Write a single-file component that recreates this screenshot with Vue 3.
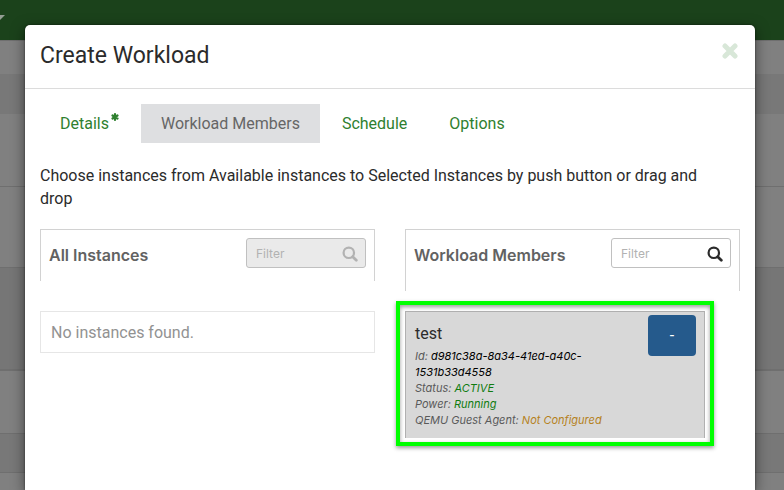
<script setup>
import { ref } from 'vue'

const tabs = [
  { label: 'Details', required: true },
  { label: 'Workload Members' },
  { label: 'Schedule' },
  { label: 'Options' }
]
const active = ref('Workload Members')
const bands = ['b1', 'b2', 'b3', 'b4', 'b5', 'b6', 'b7', 'b8']
const filterAll = ref('')
const filterMembers = ref('')
</script>

<template>
  <div class="page">
    <div class="backdrop" aria-hidden="true">
      <div class="navbar">
        <svg class="caret" width="5" height="6" viewBox="0 0 5 6"><path d="M0 0H5L0 5Z" fill="#949e94" /></svg>
      </div>
      <div v-for="b in bands" :key="b" class="band" :class="b"></div>
    </div>

    <section class="modal" role="dialog" aria-labelledby="modal-title">
      <header class="modal-header">
        <h1 id="modal-title">Create Workload</h1>
        <button class="close" type="button" aria-label="Close">
          <svg width="16" height="16" viewBox="0 0 16 16"><path d="M3 3L13 13M13 3L3 13" stroke="#d8e7d8" stroke-width="5" stroke-linecap="round" /></svg>
        </button>
      </header>

      <div class="modal-body">
        <nav class="tabs">
          <a v-for="t in tabs" :key="t.label" href="#" class="tab" :class="{ active: t.label === active }" @click.prevent="active = t.label">
            {{ t.label }}
            <svg v-if="t.required" class="star" width="8" height="10" viewBox="0 0 8 10"><path d="M4 2V8M1.5 3.5L6.5 6.5M6.5 3.5L1.5 6.5" stroke="#2f802f" stroke-width="2.2" stroke-linecap="round" /></svg>
          </a>
        </nav>

        <p class="help">Choose instances from Available instances to Selected Instances by push button or drag and drop</p>

        <div class="columns">
          <section class="column">
            <div class="panel">
              <h2>All Instances</h2>
              <label class="filter disabled">
                <input v-model="filterAll" type="text" placeholder="Filter" aria-label="Filter all instances" disabled />
                <svg width="16" height="16" viewBox="0 0 16 16" fill="none" stroke="currentColor"><circle cx="6.8" cy="6.8" r="5.2" stroke-width="2.2" /><path d="M10.7 10.7L14.3 14.3" stroke-width="2.8" stroke-linecap="round" /></svg>
              </label>
            </div>
            <div class="empty">No instances found.</div>
          </section>

          <section class="column">
            <div class="panel members">
              <h2>Workload Members</h2>
              <label class="filter">
                <input v-model="filterMembers" type="text" placeholder="Filter" aria-label="Filter workload members" />
                <svg width="16" height="16" viewBox="0 0 16 16" fill="none" stroke="currentColor"><circle cx="6.8" cy="6.8" r="5.2" stroke-width="2.2" /><path d="M10.7 10.7L14.3 14.3" stroke-width="2.8" stroke-linecap="round" /></svg>
              </label>
            </div>
            <article class="card">
              <div class="info">
                <h3>test</h3>
                <p>Id: <span class="id">d981c38a-8a34-41ed-a40c-1531b33d4558</span></p>
                <p>Status: <span class="ok">ACTIVE</span></p>
                <p>Power: <span class="ok">Running</span></p>
                <p>QEMU Guest Agent: <span class="warn">Not Configured</span></p>
              </div>
              <button class="remove" type="button">-</button>
            </article>
          </section>
        </div>
      </div>
    </section>
  </div>
</template>

<style>
body {
  margin: 0;
  background: #808080;
}
</style>

<style scoped>
.page {
  position: relative;
  min-height: 100vh;
  overflow: hidden;
  font-family: Roboto, "Liberation Sans", sans-serif;
  font-size: 16px;
  color: #2b2b2b;
}
.page * {
  box-sizing: border-box;
}
.backdrop {
  position: absolute;
  inset: 0;
  display: flex;
  flex-direction: column;
}
.navbar {
  flex: none;
  height: 40px;
  padding-top: 15px;
  background: #1b421b;
}
.caret {
  display: block;
}
.band {
  flex: none;
  background: #808080;
  border-top: 1px solid #6f6f6f;
}
.b1 { height: 34px; }
.b2 { height: 40px; background: #787878; border-top: 0; }
.b3 { height: 72px; border-top: 0; }
.b4 { height: 81px; }
.b5 { height: 102px; background: #767676; }
.b6 { height: 64px; border-top-width: 2px; }
.b7 { height: 39px; background: #787878; }
.b8 { flex: 1; }

.modal {
  position: relative;
  margin: 25px 29px 0 25px;
  min-height: calc(100vh - 25px);
  background: #fff;
  border-radius: 5px 5px 0 0;
  box-shadow: 0 4px 14px rgba(0, 0, 0, 0.5), 0 0 2px rgba(0, 0, 0, 0.6);
}
.modal-header {
  display: flex;
  justify-content: space-between;
  align-items: flex-start;
  height: 64px;
  padding: 16px 17px 0 15px;
  border-bottom: 1px solid #dcdcdc;
}
h1 {
  margin: 0;
  font-size: 23px;
  line-height: 30px;
  font-weight: 400;
}
.close {
  display: flex;
  margin-top: 2px;
  padding: 0;
  border: 0;
  background: none;
}
.modal-body {
  padding: 15px;
}
.tabs {
  display: flex;
  gap: 2px;
}
.tab {
  display: flex;
  gap: 2px;
  padding: 8px 20px;
  line-height: 23px;
  color: #2f802f;
  text-decoration: none;
}
.tab.active {
  background: #dedfe1;
  color: #666;
}
.help {
  margin: 21px 0 19px;
  padding-right: 24px;
  line-height: 23px;
}
.columns {
  display: grid;
  grid-template-columns: 1fr 1fr;
  gap: 30px;
  align-items: start;
}
.panel {
  display: flex;
  justify-content: space-between;
  align-items: flex-start;
  height: 52px;
  margin-bottom: 30px;
  padding: 8px 8px 0;
  border: 1px solid #d2d2d2;
  border-bottom: 0;
}
.panel.members {
  height: 62px;
  margin-bottom: 20px;
}
h2 {
  margin: 5px 0 0;
  font-family: Inter, "Liberation Sans", sans-serif;
  font-size: 16px;
  line-height: 24px;
  font-weight: 600;
  color: #626262;
}
.filter {
  display: flex;
  align-items: center;
  width: 120px;
  height: 30px;
  padding: 0 7px 0 9px;
  border: 1px solid #c0c0c0;
  border-radius: 3px;
  background: #fff;
}
.filter svg {
  flex: none;
  margin-top: 2px;
}
.filter input {
  flex: 1;
  min-width: 0;
  padding: 0;
  border: 0;
  outline: 0;
  background: none;
  font-family: Inter, "Liberation Sans", sans-serif;
  font-size: 12px;
}
.filter input::placeholder {
  color: #b2b2b2;
  opacity: 1;
}
.filter.disabled {
  background: #eaeaea;
  color: #b2b2b2;
}
.empty {
  padding: 9px 10px 8px;
  border: 1px solid #e6e6e6;
  line-height: 23px;
  color: #929292;
}
.card {
  position: relative;
  display: flex;
  align-items: flex-start;
  justify-content: space-between;
  margin-right: 35px;
  padding: 3px 8px 10px 9px;
  border: 1px solid #b0b0b0;
  border-bottom: 0;
  background: #d8d8d8;
}
.card::after {
  content: "";
  position: absolute;
  inset: -11px -10px -8px;
  border: 4px solid #0f0;
  box-shadow: 0 2px 4px rgba(0, 0, 0, 0.4), inset 0 2px 4px rgba(0, 0, 0, 0.4);
  pointer-events: none;
}
.info {
  width: 190px;
}
h3 {
  margin: 7px 0 2px;
  font-size: 16px;
  line-height: 24px;
  font-weight: 400;
}
.info p {
  margin: 0;
  font-family: Inter, "Liberation Sans", sans-serif;
  font-size: 11px;
  line-height: 16px;
  font-style: italic;
  color: #5a5a5a;
}
.info .id { color: #000; }
.info .ok { color: #107c10; }
.info .warn { color: #b5811c; }
.remove {
  width: 48px;
  height: 41px;
  padding: 0;
  border: 0;
  border-radius: 4px;
  background: #255a8c;
  color: #fff;
  font: inherit;
}
</style>
